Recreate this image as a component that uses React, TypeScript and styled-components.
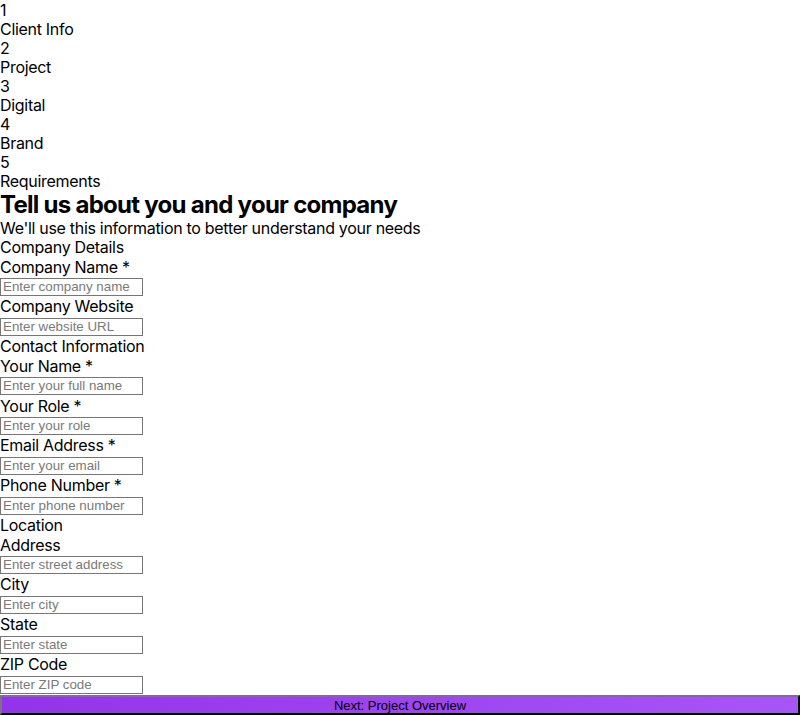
import React from "react";
import styled, { createGlobalStyle } from "styled-components";

const GlobalStyle = createGlobalStyle`
	body {
		margin: 0;
		background: #ffffff;
		color: #000000;
		font-family: Inter, "Noto Sans", sans-serif;
		font-size: 16px;
		letter-spacing: -0.3px;
	}
`;

const Page = styled.div`
	display: flex;
	flex-direction: column;
`;

const Steps = styled.div`
	display: flex;
	flex-direction: column;
	padding-top: 1px;
`;

const Step = styled.div`
	display: flex;
	flex-direction: column;
	line-height: 19px;
`;

const Line = styled.div`
	line-height: 19.3px;
`;

const Title = styled.h2`
	margin: 0;
	font-size: 24px;
	font-weight: 700;
	line-height: 28px;
	letter-spacing: -0.72px;
`;

const Field = styled.div`
	display: flex;
	flex-direction: column;
	align-items: flex-start;
`;

const Input = styled.input`
	box-sizing: border-box;
	width: 143px;
	height: 18px;
	margin: 1px 0 1.6px;
	padding: 0 2px;
	border: 1px solid #767676;
	border-radius: 0;
	font-family: "Liberation Sans", Arial, sans-serif;
	font-size: 13.33px;
	letter-spacing: 0;
	color: #000;
	background: #fff;
	outline: none;

	&::placeholder {
		color: #7a7a7a;
	}
`;

const NextButton = styled.button`
	box-sizing: border-box;
	width: 100%;
	height: 20px;
	padding: 0;
	border: 2px outset #767676;
	border-right-color: #222;
	border-bottom-color: #222;
	background: linear-gradient(to right, #9333ea, #a855f7);
	font-family: "Liberation Sans", Arial, sans-serif;
	font-size: 13px;
	letter-spacing: 0;
	color: #000;
	cursor: pointer;
`;

const steps = ["Client Info", "Project", "Digital", "Brand", "Requirements"];

type FieldDef = { label: string; placeholder: string };

const sections: { title: string; fields: FieldDef[] }[] = [
	{
		title: "Company Details",
		fields: [
			{ label: "Company Name *", placeholder: "Enter company name" },
			{ label: "Company Website", placeholder: "Enter website URL" },
		],
	},
	{
		title: "Contact Information",
		fields: [
			{ label: "Your Name *", placeholder: "Enter your full name" },
			{ label: "Your Role *", placeholder: "Enter your role" },
			{ label: "Email Address *", placeholder: "Enter your email" },
			{ label: "Phone Number *", placeholder: "Enter phone number" },
		],
	},
	{
		title: "Location",
		fields: [
			{ label: "Address", placeholder: "Enter street address" },
			{ label: "City", placeholder: "Enter city" },
			{ label: "State", placeholder: "Enter state" },
			{ label: "ZIP Code", placeholder: "Enter ZIP code" },
		],
	},
];

const App = () => (
	<Page>
		<GlobalStyle />
		<Steps>
			{steps.map((s, i) => (
				<Step key={s}>
					<span>{i + 1}</span>
					<span>{s}</span>
				</Step>
			))}
		</Steps>
		<Title>Tell us about you and your company</Title>
		<Line>We'll use this information to better understand your needs</Line>
		{sections.map((sec) => (
			<div key={sec.title}>
				<Line>{sec.title}</Line>
				{sec.fields.map((f) => (
					<Field key={f.label}>
						<Line as="label">{f.label}</Line>
						<Input placeholder={f.placeholder} />
					</Field>
				))}
			</div>
		))}
		<NextButton>Next: Project Overview</NextButton>
	</Page>
);

export default App;
